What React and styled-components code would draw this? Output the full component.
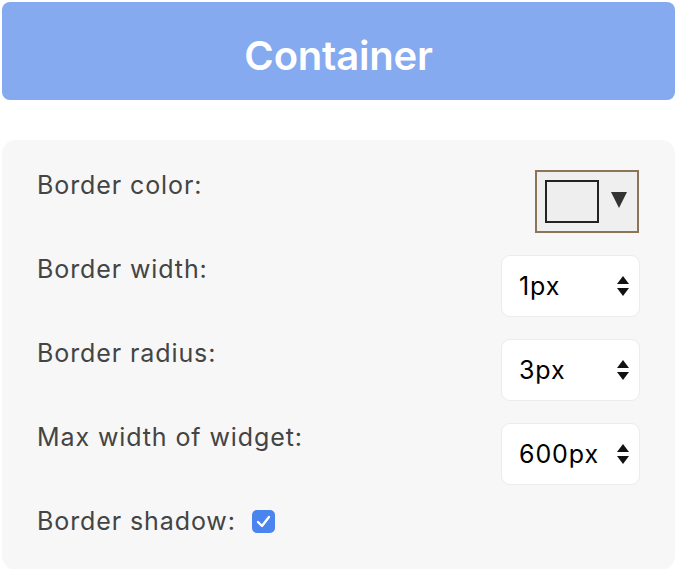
import React from "react";
import styled, { createGlobalStyle } from "styled-components";

const Global = createGlobalStyle`
  html, body { margin: 0; padding: 0; background: #ffffff; }
  body { font-family: Inter, "Noto Sans", sans-serif; }
`;

const Page = styled.div`
  padding: 2px 2px 1px 2px;
  display: flex;
  flex-direction: column;
  gap: 40px;
`;

const Header = styled.div`
  height: 98px;
  box-sizing: border-box;
  padding-top: 8px;
  border-radius: 8px;
  background: #85aaf0;
  color: #ffffff;
  display: flex;
  align-items: center;
  justify-content: center;
  font-size: 40px;
  font-weight: 600;
  letter-spacing: -0.2px;
`;

const Panel = styled.div`
  background: #f7f7f7;
  border-radius: 14px;
  padding: 30px 35px 34px 35px;
  display: flex;
  flex-direction: column;
  gap: 22px;
`;

const Row = styled.div`
  display: flex;
  align-items: flex-start;
  justify-content: space-between;
`;

const InlineRow = styled.div`
  display: flex;
  align-items: center;
  gap: 16px;
`;

const Label = styled.div`
  font-size: 25px;
  line-height: 29px;
  letter-spacing: 0.9px;
  color: #444444;
  padding-top: ${(p) => p.$offset || 0}px;
`;

const ColorButton = styled.div`
  width: 100px;
  height: 59px;
  box-sizing: content-box;
  border: 2px solid #8b7457;
  background: #efefef;
  display: flex;
  align-items: center;
  margin-right: 1px;
`;

const Swatch = styled.div`
  width: 50px;
  height: 39px;
  margin-left: 8px;
  border: 2px solid #222222;
  background: #eeeeee;
`;

const Caret = styled.svg`
  margin-left: 12px;
  margin-top: -4px;
`;

const SelectBox = styled.div`
  box-sizing: border-box;
  width: 139px;
  height: 62px;
  border: 1px solid #ececec;
  border-radius: 9px;
  background: #ffffff;
  display: flex;
  align-items: center;
  justify-content: space-between;
  padding: 0 9px 0 17px;
  font-family: Inter, "Liberation Sans", sans-serif;
  font-size: 25px;
  letter-spacing: 0.9px;
  color: #000000;
`;

const Check = styled.div`
  width: 23px;
  height: 23px;
  border-radius: 5px;
  background: #4a84ee;
  display: flex;
  align-items: center;
  justify-content: center;
`;

const Arrows = () => (
  <svg width="14" height="22" viewBox="0 0 14 22">
    <path d="M7 1 L13 9 L1 9 Z" fill="#111" />
    <path d="M1 13 L13 13 L7 21 Z" fill="#111" />
  </svg>
);

const Select = ({ value }) => (
  <SelectBox>
    <span>{value}</span>
    <Arrows />
  </SelectBox>
);

export default function App() {
  return (
    <>
      <Global />
      <Page>
        <Header>Container</Header>
        <Panel>
          <Row>
            <Label $offset={1}>Border color:</Label>
            <ColorButton>
              <Swatch />
              <Caret width="16" height="16" viewBox="0 0 16 16">
                <path d="M0 0 L16 0 L8 16 Z" fill="#333" />
              </Caret>
            </ColorButton>
          </Row>
          <Row>
            <Label>Border width:</Label>
            <Select value="1px" />
          </Row>
          <Row>
            <Label>Border radius:</Label>
            <Select value="3px" />
          </Row>
          <Row>
            <Label>Max width of widget:</Label>
            <Select value="600px" />
          </Row>
          <InlineRow>
            <Label>Border shadow:</Label>
            <Check>
              <svg width="15" height="13" viewBox="0 0 15 13">
                <path d="M2 7 L6 11 L13 2" stroke="#fff" strokeWidth="2.4" fill="none" strokeLinecap="round" strokeLinejoin="round" />
              </svg>
            </Check>
          </InlineRow>
        </Panel>
      </Page>
    </>
  );
}
